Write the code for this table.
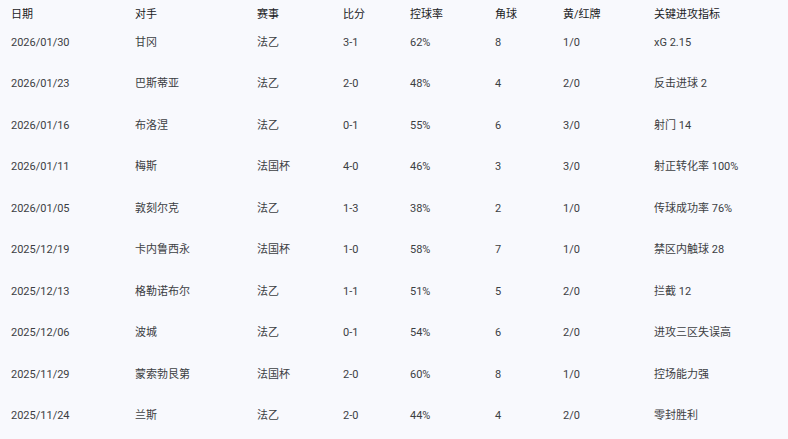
const headers = ["日期", "对手", "赛事", "比分", "控球率", "角球", "黄/红牌", "关键进攻指标"];

const matches = [
  ["2026/01/30", "甘冈", "法乙", "3-1", "62%", "8", "1/0", "xG 2.15"],
  ["2026/01/23", "巴斯蒂亚", "法乙", "2-0", "48%", "4", "2/0", "反击进球 2"],
  ["2026/01/16", "布洛涅", "法乙", "0-1", "55%", "6", "3/0", "射门 14"],
  ["2026/01/11", "梅斯", "法国杯", "4-0", "46%", "3", "3/0", "射正转化率 100%"],
  ["2026/01/05", "敦刻尔克", "法乙", "1-3", "38%", "2", "1/0", "传球成功率 76%"],
  ["2025/12/19", "卡内鲁西永", "法国杯", "1-0", "58%", "7", "1/0", "禁区内触球 28"],
  ["2025/12/13", "格勒诺布尔", "法乙", "1-1", "51%", "5", "2/0", "拦截 12"],
  ["2025/12/06", "波城", "法乙", "0-1", "54%", "6", "2/0", "进攻三区失误高"],
  ["2025/11/29", "蒙索勃艮第", "法国杯", "2-0", "60%", "8", "1/0", "控场能力强"],
  ["2025/11/24", "兰斯", "法乙", "2-0", "44%", "4", "2/0", "零封胜利"],
];

const cols = "grid grid-cols-[124px_122px_86px_67px_85px_68px_91px_1fr]";

export default function App() {
  return (
    <div
      className="min-h-screen w-full bg-[#f8f9fd] pl-[11px] text-[11px]"
      style={{ fontFamily: '"Google Sans", Roboto, "Noto Sans CJK SC", sans-serif' }}
    >
      <div className={`${cols} h-[22px] pt-[7px] leading-4 text-[#202124]`}>
        {headers.map((h) => (
          <div key={h}>{h}</div>
        ))}
      </div>
      {matches.map((row) => (
        <div key={row[0]} className={`${cols} h-[41.5px] items-center leading-4 text-[#3c4043]`}>
          {row.map((cell, i) => (
            <div key={i} className="whitespace-nowrap">
              {cell}
            </div>
          ))}
        </div>
      ))}
    </div>
  );
}
